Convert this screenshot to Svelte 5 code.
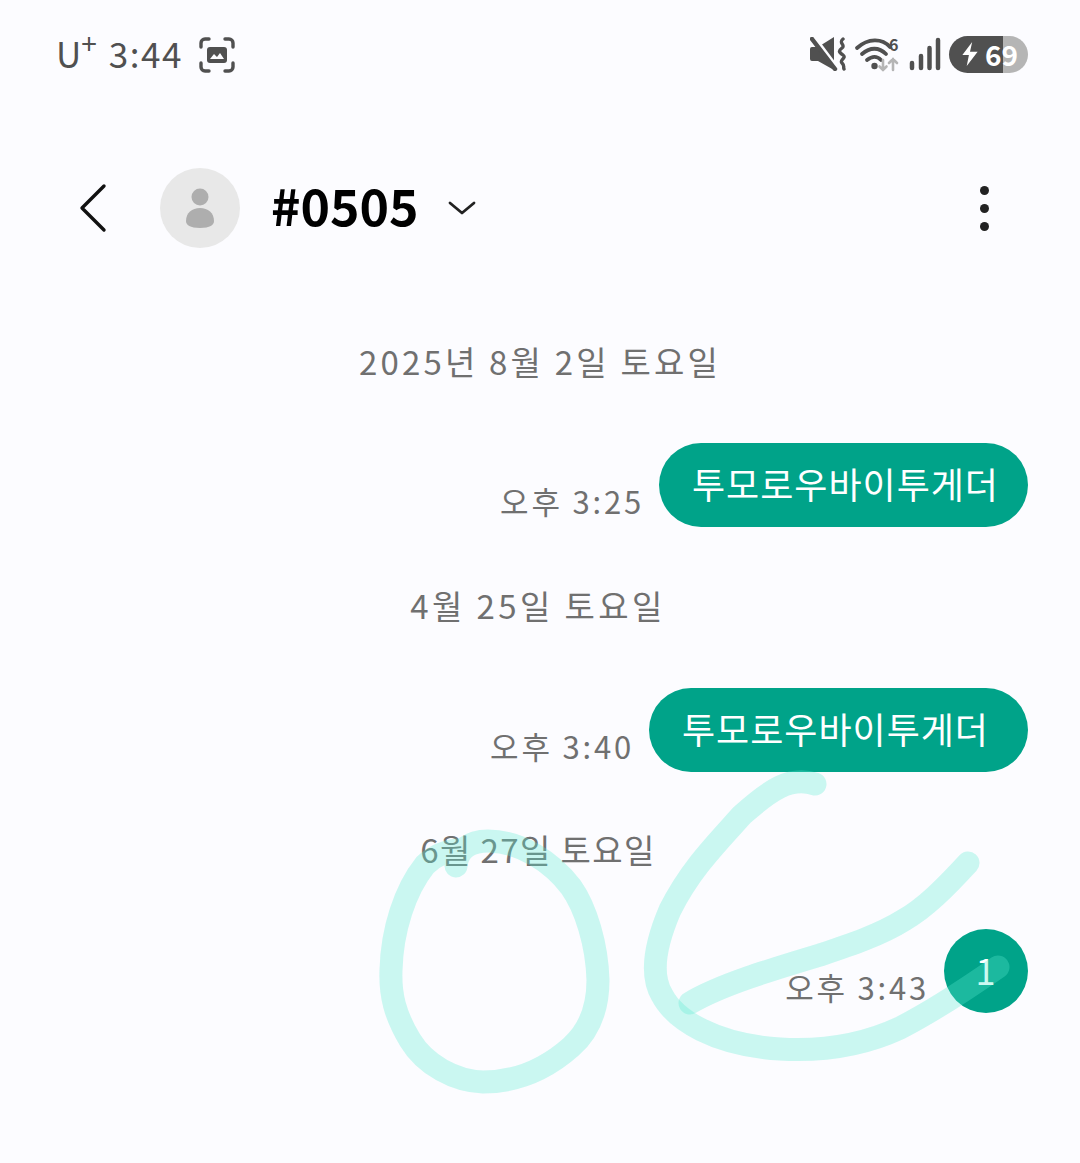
<script lang="ts">
	const thread = [
		{ date: '2025년 8월 2일 토요일', time: '오후 3:25', text: '투모로우바이투게더' },
		{ date: '4월 25일 토요일', time: '오후 3:40', text: '투모로우바이투게더' },
		{ date: '6월 27일 토요일', time: '오후 3:43', text: '1' }
	];
</script>

<div class="screen">
	<div class="status">
		<div class="statusLeft">
			<span class="carrier">U<sup>+</sup></span>
			<span class="clock">3:44</span>
			<svg class="capture" width="38" height="38" viewBox="0 0 38 38" fill="none">
				<path d="M3 11V7a4 4 0 0 1 4-4h4M27 3h4a4 4 0 0 1 4 4v4M35 27v4a4 4 0 0 1-4 4h-4M11 35H7a4 4 0 0 1-4-4v-4" stroke="#505050" stroke-width="3.4" stroke-linecap="round" />
				<rect x="9" y="11" width="20" height="16" rx="3" fill="#505050" />
				<path d="M12 23l4-5 3 3 3-4 4 6z" fill="#fcfcff" />
			</svg>
		</div>
		<div class="statusRight">
			<svg width="36" height="34" viewBox="0 0 36 34">
				<path d="M0 12q0-2 2-2h6L24 0v33L8 24H2q-2 0-2-2z" fill="#505050" />
				<path d="M4 0l24 32" stroke="#fcfcff" stroke-width="4" />
				<path d="M2 2l23 30" stroke="#505050" stroke-width="4.500" stroke-linecap="round" />
				<path d="M33 2c-5 4 3 6-1 9s-3 4 1 7-4 5-1 8 1 4 2 6" stroke="#505050" stroke-width="3.400" fill="none" stroke-linecap="round" />
			</svg>
			<svg class="wifi" width="46" height="36" viewBox="0 0 46 36" fill="none">
				<path d="M2 12c11-10 25-10 33-1M7 18c8-7 17-7 24 0M12 24c5-4 10-4 14 0" stroke="#505050" stroke-width="3.800" stroke-linecap="round" />
				<circle cx="19.500" cy="30" r="3.200" fill="#505050" />
				<path d="M28 24v10m-3.500-3.500L28 34l3.500-3.500" stroke="#b5b5b5" stroke-width="2.600" stroke-linecap="round" />
				<path d="M38 34V23m-4 4l4-4 4 4" stroke="#b5b5b5" stroke-width="2.600" stroke-linecap="round" />
				<text x="34" y="15" class="wifiGen">6</text>
			</svg>
			<svg width="32" height="34" viewBox="0 0 32 34" fill="none" stroke="#505050" stroke-width="4.500" stroke-linecap="round">
				<path d="M3 26v5M12 19v12M20.500 11v20M29 3v28" />
			</svg>
			<div class="battery">
				<svg width="18" height="24" viewBox="0 0 16 22"><path d="M10 0L1 12h6l-2 10 10-13H8z" fill="#fff" /></svg>
				<span>69</span>
			</div>
		</div>
	</div>

	<header class="header">
		<svg class="back" width="28" height="50" viewBox="0 0 28 50" fill="none">
			<path d="M25 3L3 25l22 22" stroke="#111" stroke-width="3.400" stroke-linecap="round" stroke-linejoin="round" />
		</svg>
		<div class="avatar">
			<svg width="30" height="40" viewBox="0 0 30 40" fill="#aeaeae">
				<circle cx="15" cy="9" r="8.500" />
				<path d="M1 33c0-8 6-13 14-13s14 5 14 13c0 4-4 7-14 7S1 37 1 33z" />
			</svg>
		</div>
		<div class="title">#0505</div>
		<svg class="chevron" width="28" height="16" viewBox="0 0 28 16" fill="none">
			<path d="M2 3l12 10L26 3" stroke="#222" stroke-width="2.800" stroke-linecap="round" stroke-linejoin="round" />
		</svg>
		<div class="more"><i></i><i></i><i></i></div>
	</header>

	<main class="thread">
		{#each thread as m}
			<div class="date">{m.date}</div>
			<div class="row">
				<span class="time">{m.time}</span>
				<div class="bubble" class:round={m.text.length === 1}>{m.text}</div>
			</div>
		{/each}
	</main>

	<svg class="scribble" width="1080" height="1163" viewBox="0 0 1080 1163" fill="none">
		<path d="M456 866C457 850 470 841 488 841C520 841 552 862 571 887C586 908 597 945 598 980C598 1010 588 1032 571 1047C545 1070 515 1082 483 1082C455 1081 425 1065 410 1040C395 1015 390 995 391 970C392 930 405 890 425 865C435 855 445 852 456 850" />
		<path d="M815 784C790 776 770 790 742 815C715 845 690 870 670 910C655 945 650 975 662 995C675 1020 715 1045 780 1049C830 1052 870 1042 900 1028C935 1010 965 990 998 967" />
		<path d="M968 863C945 888 925 908 904 920C880 935 850 945 820 955C770 970 720 985 690 1003" />
	</svg>
</div>

<style>
	:global(body) {
		margin: 0;
		background: #fcfcff;
	}

	.screen {
		position: relative;
		width: 1080px;
		height: 1163px;
		overflow: hidden;
		background: #fcfcff;
		font-family: 'Noto Sans CJK KR', 'Noto Sans', sans-serif;
	}

	.status {
		display: flex;
		align-items: center;
		justify-content: space-between;
		height: 110px;
		padding: 0 52px 0 56px;
		box-sizing: border-box;
		color: #505050;
	}

	.statusLeft {
		display: flex;
		align-items: center;
		font-size: 35px;
		line-height: 1;
	}

	.carrier,
	.clock {
		margin-top: -5px;
	}

	.carrier sup {
		font-size: 28px;
		line-height: 0;
		vertical-align: 14px;
	}

	.clock {
		margin-left: 12px;
		letter-spacing: 1.500px;
	}

	.capture {
		margin-left: 15px;
	}

	.statusRight {
		display: flex;
		align-items: center;
		gap: 8px;
		margin-top: -2px;
	}

	.wifi {
		overflow: visible;
		margin-left: 1px;
	}

	.wifiGen {
		font-size: 16px;
		font-weight: 700;
		fill: #505050;
	}

	.battery {
		display: flex;
		align-items: center;
		gap: 6px;
		width: 79px;
		height: 37px;
		box-sizing: border-box;
		padding-left: 12px;
		border-radius: 19px;
		background: linear-gradient(90deg, #505050 68%, #b5b5b5 68%);
		color: #fff;
		font-size: 28px;
		font-weight: 700;
		line-height: 1;
	}

	.header {
		display: flex;
		align-items: center;
		height: 80px;
		margin-top: 58px;
		padding: 0 91px 0 79px;
	}

	.avatar {
		display: flex;
		align-items: center;
		justify-content: center;
		width: 80px;
		height: 80px;
		margin-left: 53px;
		border-radius: 50%;
		background: #e8e8e8;
	}

	.title {
		margin: -8px 0 0 31px;
		color: #000;
		font-size: 50px;
		font-weight: 700;
		line-height: 1;
	}

	.chevron {
		margin-left: 29px;
	}

	.more {
		display: flex;
		flex-direction: column;
		gap: 9px;
		margin-left: auto;
	}

	.more i {
		width: 9px;
		height: 9px;
		border-radius: 50%;
		background: #222;
	}

	.thread {
		display: flex;
		flex-direction: column;
		gap: 55px;
		margin-top: 90px;
		padding-right: 52px;
	}

	.date {
		height: 50px;
		margin-left: 48px;
		color: #707070;
		font-size: 33px;
		letter-spacing: 3.400px;
		line-height: 47px;
		text-align: center;
	}

	.date:nth-child(1) {
		margin-left: 52px;
		letter-spacing: 3.200px;
	}

	.date:nth-child(5) {
		margin-top: -2px;
		letter-spacing: 1.400px;
		line-height: 48px;
	}

	.row:nth-child(4) {
		margin-top: 1px;
	}

	.row:nth-child(6) {
		margin-top: -1px;
	}

	.row {
		display: flex;
		align-items: flex-end;
		justify-content: flex-end;
		gap: 15px;
	}

	.time {
		margin-bottom: 6px;
		color: #707070;
		font-size: 31px;
		letter-spacing: 2.800px;
		line-height: 40px;
	}

	.bubble {
		height: 84px;
		padding: 0 29px 0 33px;
		border-radius: 42px;
		background: #00a389;
		color: #fff;
		font-size: 36px;
		letter-spacing: 1px;
		line-height: 80px;
	}

	.row:nth-child(4) .bubble {
		padding-right: 39px;
	}

	.bubble.round {
		width: 84px;
		padding: 0;
		text-align: center;
		border-radius: 50%;
	}

	.scribble {
		position: absolute;
		inset: 0;
		pointer-events: none;
	}

	.scribble path {
		stroke: rgba(90, 235, 210, 0.31);
		stroke-width: 23;
		stroke-linecap: round;
		stroke-linejoin: round;
	}
</style>
